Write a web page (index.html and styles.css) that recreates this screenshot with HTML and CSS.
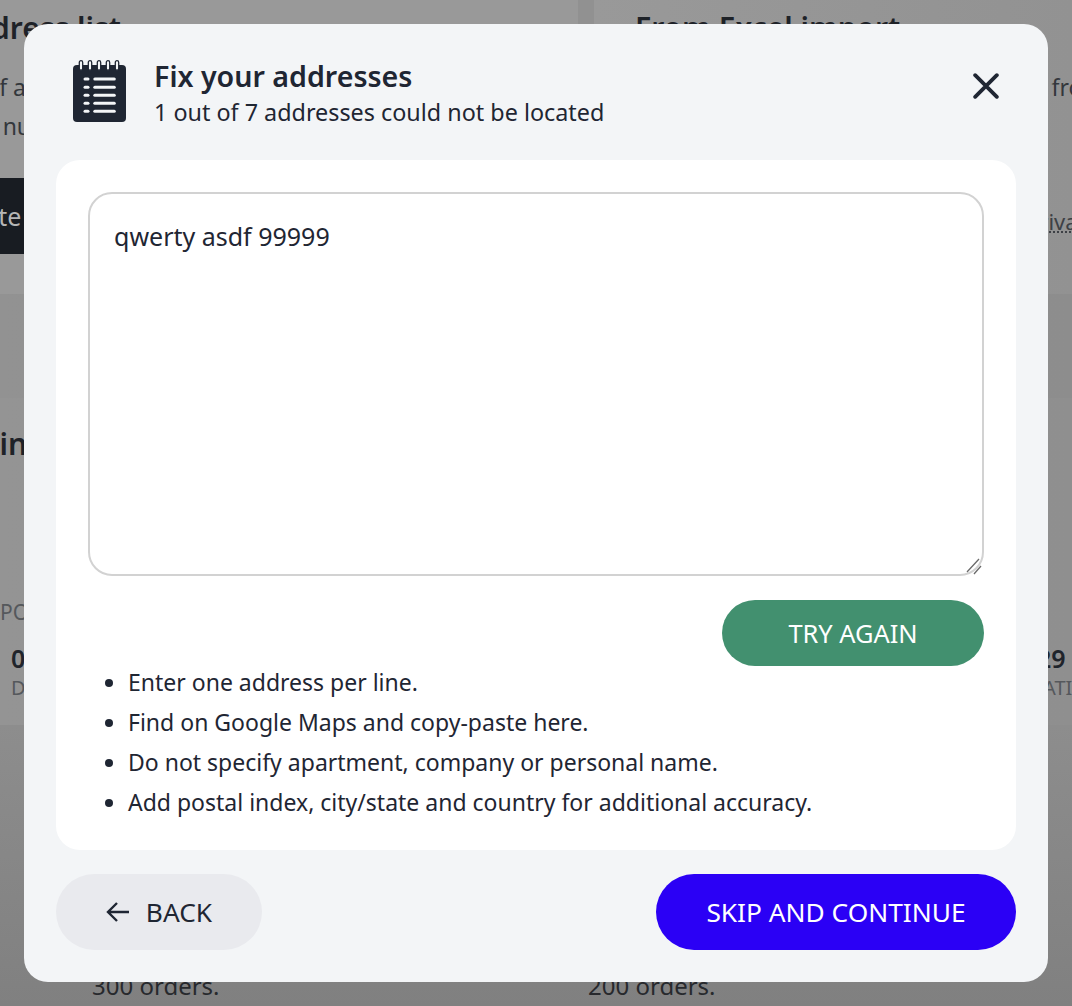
FILE: index.html
```html
<!DOCTYPE html>
<html lang="en">
<head>
<meta charset="utf-8">
<title>Fix your addresses</title>
<link rel="stylesheet" href="styles.css">
</head>
<body>
<div class="page">
  <section class="row row-top">
    <div class="card card-left">
      <h2 class="bg-title">Address list</h2>
      <p class="bg-text lead-a">List of a</p>
      <p class="bg-text lead-b">manual nu</p>
      <div class="bg-btn">Paste</div>
    </div>
    <div class="card card-right">
      <h2 class="bg-title">From Excel import</h2>
      <p class="bg-text lead-c">Upload your orders directly from</p>
      <div class="privacy"><span class="dotted">Private</span></div>
    </div>
  </section>
  <section class="row-band"></section>
  <section class="row-stats">
    <h2 class="bg-title stats-title">Main</h2>
    <p class="stats-label">PO</p>
    <div class="stats-line">
      <div class="stat stat-left"><b>0</b><span>D</span></div>
      <div class="stat stat-right"><b>29</b><span>ATI</span></div>
    </div>
  </section>
  <section class="row-plans">
    <p class="plan">300 orders.</p>
    <p class="plan">200 orders.</p>
  </section>
</div>

<div class="overlay">
  <div class="modal" role="dialog" aria-labelledby="modal-title">
    <header class="modal-head">
      <svg class="notepad" viewBox="0 0 53 62" aria-hidden="true">
        <path class="pad" d="M4 5h45a4 4 0 0 1 4 4v49a4 4 0 0 1-4 4H4a4 4 0 0 1-4-4V9a4 4 0 0 1 4-4z"/>
        <g class="rings">
          <rect x="6.300" y="0.700" width="3.400" height="9.500" rx="1.700"/>
          <rect x="15.300" y="0.700" width="3.400" height="9.500" rx="1.700"/>
          <rect x="24.300" y="0.700" width="3.400" height="9.500" rx="1.700"/>
          <rect x="33.300" y="0.700" width="3.400" height="9.500" rx="1.700"/>
          <rect x="42.300" y="0.700" width="3.400" height="9.500" rx="1.700"/>
        </g>
        <g class="lines">
          <rect x="10.500" y="17.500" width="6" height="3" rx="1.500"/><rect x="20.300" y="17.500" width="22.500" height="3" rx="1.500"/>
          <rect x="10.500" y="25.700" width="6" height="3" rx="1.500"/><rect x="20.300" y="25.700" width="22.500" height="3" rx="1.500"/>
          <rect x="10.500" y="33.700" width="6" height="3" rx="1.500"/><rect x="20.300" y="33.700" width="22.500" height="3" rx="1.500"/>
          <rect x="10.500" y="41.700" width="6" height="3" rx="1.500"/><rect x="20.300" y="41.700" width="22.500" height="3" rx="1.500"/>
          <rect x="10.500" y="49.700" width="6" height="3" rx="1.500"/><rect x="20.300" y="49.700" width="22.500" height="3" rx="1.500"/>
        </g>
      </svg>
      <div class="head-text">
        <h1 id="modal-title">Fix your addresses</h1>
        <p>1 out of 7 addresses could not be located</p>
      </div>
      <button class="close" type="button" aria-label="Close">
        <svg viewBox="0 0 24 24" aria-hidden="true"><path d="M2 2l20 20M22 2L2 22"/></svg>
      </button>
    </header>
    <main class="modal-body">
      <div class="field">
        <textarea class="addresses" spellcheck="false">qwerty asdf 99999</textarea>
        <svg class="grip" viewBox="0 0 16 18" aria-hidden="true"><path d="M1 15L13 2M8 17L15 9"/></svg>
      </div>
      <div class="retry-row"><button class="btn btn-green" type="button">TRY AGAIN</button></div>
      <ul class="tips">
        <li>Enter one address per line.</li>
        <li>Find on Google Maps and copy-paste here.</li>
        <li>Do not specify apartment, company or personal name.</li>
        <li>Add postal index, city/state and country for additional accuracy.</li>
      </ul>
    </main>
    <footer class="modal-foot">
      <button class="btn btn-back" type="button">
        <svg viewBox="0 0 24 24" aria-hidden="true"><path d="M23 12H2M11 3l-9 9 9 9"/></svg>
        BACK
      </button>
      <button class="btn btn-skip" type="button">SKIP AND CONTINUE</button>
    </footer>
  </div>
</div>
</body>
</html>
```
FILE: styles.css
```css
* { box-sizing: border-box; }
html, body { margin: 0; height: 100%; overflow: hidden; }
body { font-family: "Noto Sans", "Open Sans", sans-serif; color: #1f2633; }

/* dimmed page behind the dialog */
.page { height: 1006px; overflow: hidden; background: #9a9a9a; color: #1e2228; }
.row-top { display: grid; grid-template-columns: 578px 1fr; column-gap: 16px; height: 294px; background: linear-gradient(90deg, #999 0, #999 578px, #919191 578px, #919191 594px, #999 594px, #929292 100%); }
.card { min-width: 0; overflow: hidden; white-space: nowrap; }
.card-right { padding-left: 41px; }
.bg-title { margin: 0; font-size: 30px; line-height: 36px; font-weight: 600; }
.card-left .bg-title { margin-left: -48px; margin-top: 10px; }
.card-right .bg-title { margin-top: 10px; }
.bg-text { margin: 0; font-size: 23px; line-height: 39px; color: #33373c; }
.lead-a { margin-top: 22px; margin-left: -58px; }
.lead-b { margin-left: -85px; }
.lead-c { margin-top: 22px; margin-right: -32px; text-align: right; }
.bg-btn { margin: 32px 0 0 -60px; width: 200px; height: 76px; background: #181c22; color: #b5b5b5; font-size: 25px; line-height: 76px; padding-left: 17px; }
.privacy { margin: 103px 0 0 391px; font-size: 22px; line-height: 22px; color: #3d4045; }
.dotted { display: inline-block; line-height: 20px; border-bottom: 2px dotted #3d4045; }
.row-band { height: 104px; background: linear-gradient(90deg, #929292, #8d8d8d); }
.row-stats { height: 327px; overflow: hidden; background: linear-gradient(90deg, #949494, #8f8f8f); }
.stats-title { margin-top: 28px; margin-left: -46px; white-space: nowrap; }
.stats-label { margin: 136px 0 0; font-size: 21px; line-height: 28px; color: #55585c; }
.stats-line { display: flex; justify-content: space-between; margin-top: 15px; }
.stat { display: flex; flex-direction: column; }
.stat b { font-size: 25px; line-height: 34px; font-weight: 600; color: #20242b; }
.stat span { font-size: 20px; line-height: 26px; color: #55585c; white-space: nowrap; }
.stat-left { padding-left: 11px; }
.stat-right { margin-right: -17px; width: 52px; }
.stat-right span { margin-left: 6px; }
.row-plans { height: 281px; display: flex; padding: 241px 0 0 92px; background: linear-gradient(180deg, #8d8d8d, #808080); }
.plan { margin: 0; flex: none; width: 496px; font-size: 24px; line-height: 40px; color: #27292d; }

/* dialog */
.overlay { position: fixed; inset: 0; padding: 24px; }
.modal {
  height: 958px;
  background: #f3f5f7;
  border-radius: 24px;
  padding: 0 32px;
  display: flex;
  flex-direction: column;
}
.modal-head { height: 136px; display: flex; align-items: flex-start; position: relative; }
.notepad { width: 53px; height: 62px; margin: 36px 0 0 17px; flex: none; }
.pad { fill: #1f2633; }
.rings rect { fill: #f3f5f7; stroke: #1f2633; stroke-width: 1.300; }
.lines rect { fill: #f3f5f7; }
.head-text { margin: 34px 0 0 28px; }
.head-text h1 { margin: 0; font-size: 28.600px; line-height: 36px; font-weight: 600; color: #1f2633; }
.head-text p { margin: 0; font-size: 23.350px; line-height: 36px; color: #1f2633; }
.close { position: absolute; top: 49px; right: 17px; width: 26px; height: 26px; padding: 0; border: 0; background: none; }
.close svg { display: block; width: 26px; height: 26px; fill: none; stroke: #1f2633; stroke-width: 3.500; stroke-linecap: round; }
.modal-body {
  height: 690px;
  background: #fff;
  border-radius: 24px;
  padding: 32px;
}
.field { position: relative; }
.addresses {
  display: block;
  width: 896px;
  height: 384px;
  padding: 24px;
  border: 2px solid #d2d2d2;
  border-radius: 24px;
  outline: 0;
  resize: none;
  background: #fff;
  color: #1f2633;
  font: 400 25px/36px "Noto Sans", sans-serif;
}
.grip { position: absolute; right: 2px; bottom: 1px; width: 16px; height: 18px; fill: none; stroke: #6a6a6a; stroke-width: 1.300; }
.retry-row { display: flex; justify-content: flex-end; margin-top: 24px; }
.btn {
  display: inline-flex;
  align-items: center;
  justify-content: center;
  border: 0;
  border-radius: 40px;
  padding: 0;
  font: 400 26.300px/1 "Noto Sans", sans-serif;
}
.btn-green { width: 262px; height: 66px; padding-top: 2px; background: #42906f; color: #fff; font-size: 25.400px; }
.tips { margin: -4px 0 0; padding: 0 0 0 40px; font-size: 23px; line-height: 40px; color: #1f2633; }
.modal-foot { display: flex; justify-content: space-between; margin-top: 24px; }
.btn-back { width: 206px; height: 76px; background: #e9eaee; color: #1f2633; gap: 16px; }
.btn-back svg { width: 24px; height: 24px; fill: none; stroke: #1f2633; stroke-width: 2.400; }
.btn-skip { width: 360px; height: 76px; background: #2b00f5; color: #fff; }
```
